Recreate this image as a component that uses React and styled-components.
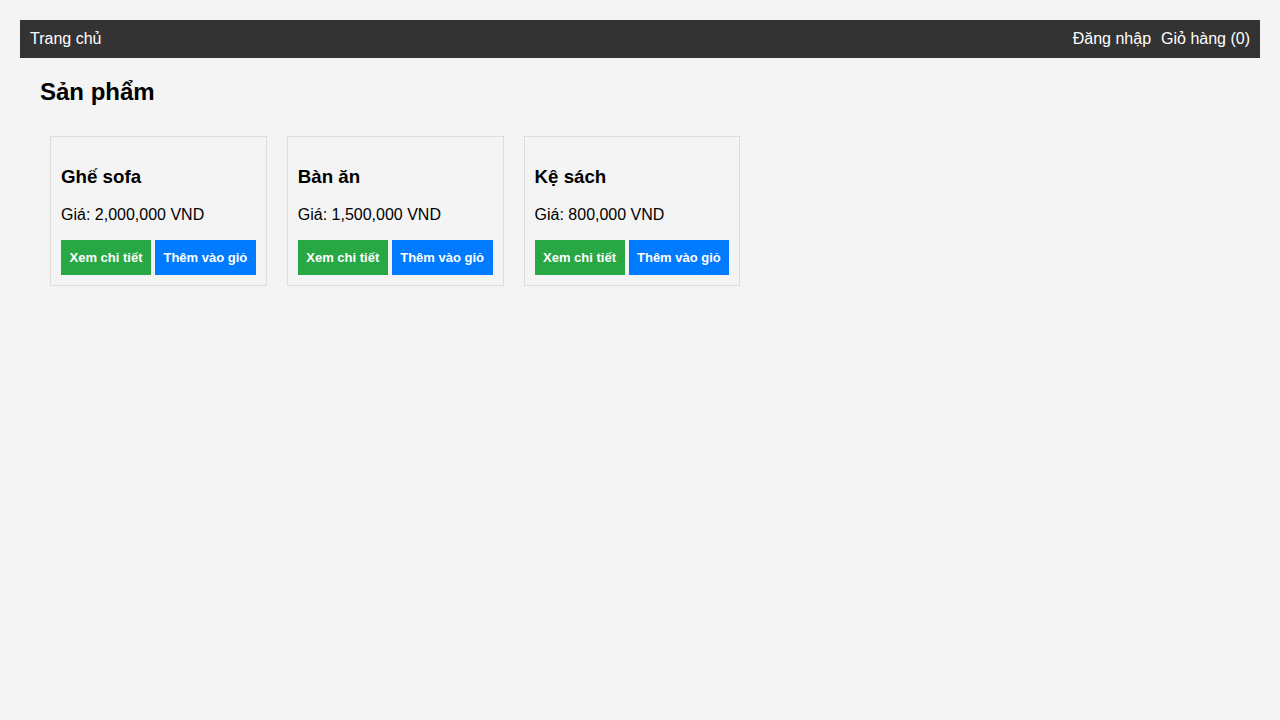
import React from "react";
import styled, { createGlobalStyle } from "styled-components";

const GlobalStyle = createGlobalStyle`
    body{
        margin: 20px;
        background-color: #f4f4f4;
        font-family: "Liberation Sans", Arial, sans-serif;
        font-size: 16px;
        color: #000;
    }
`;

const products = [
    { id: 1, name: "Ghế sofa", price: "2,000,000" },
    { id: 2, name: "Bàn ăn", price: "1,500,000" },
    { id: 3, name: "Kệ sách", price: "800,000" },
];

function App(){
    return(
        <>
            <GlobalStyle/>
            <Nav>
                <NavLink href="#">Trang chủ</NavLink>
                <NavRight>
                    <NavLink href="#">Đăng nhập</NavLink>
                    <NavLink href="#">Giỏ hàng (0)</NavLink>
                </NavRight>
            </Nav>
            <Main>
                <Title>Sản phẩm</Title>
                <ProductList>
                    {products.map(p => (
                        <Card key={p.id}>
                            <Name>{p.name}</Name>
                            <Price>Giá: {p.price} VND</Price>
                            <Actions>
                                <Button color="#28a745">Xem chi tiết</Button>
                                <Button color="#007bff">Thêm vào giỏ</Button>
                            </Actions>
                        </Card>
                    ))}
                </ProductList>
            </Main>
        </>
    )
}
export default App;

const Nav = styled.nav`
    display: flex;
    justify-content: space-between;
    align-items: center;
    padding: 10px;
    background-color: #333;
    line-height: 18px;
`;

const NavRight = styled.div`
    display: flex;
    gap: 10px;
`;

const NavLink = styled.a`
    color: #fff;
    text-decoration: none;
    font-size: 16px;
`;

const Main = styled.main`
    padding: 0 20px;
`;

const Title = styled.h2`
    font-size: 24px;
    font-weight: bold;
    margin: 20px 0 21px;
    line-height: 27px;
`;

const ProductList = styled.div`
    display: flex;
    align-items: flex-start;
`;

const Card = styled.div`
    margin: 10px;
    padding: 10px;
    border: 1px solid #ddd;
`;

const Name = styled.h3`
    font-size: 18.72px;
    font-weight: bold;
    margin: 18.72px 0;
    line-height: 21.5px;
`;

const Price = styled.p`
    margin: 16px 0;
    line-height: 18px;
`;

const Actions = styled.div`
    display: flex;
    gap: 4px;
`;

const Button = styled.button`
    padding: 10px 8.5px;
    border: none;
    background-color: ${props => props.color};
    color: #fff;
    font-family: "Liberation Sans", Arial, sans-serif;
    font-size: 13px;
    font-weight: bold;
    line-height: 15px;
    cursor: pointer;
    white-space: nowrap;
`;
